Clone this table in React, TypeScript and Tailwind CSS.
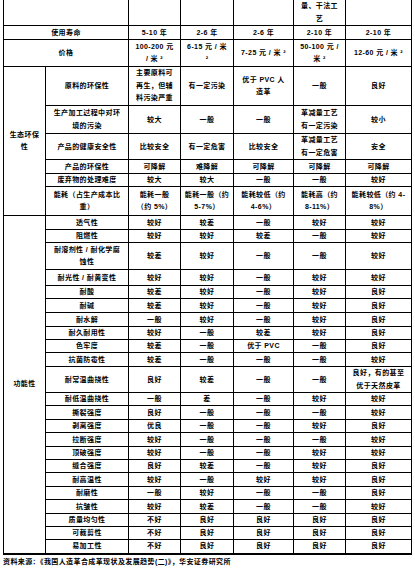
import React from 'react';

type Row = { label: React.ReactNode; cells: React.ReactNode[]; h: number };

const headRows: Row[] = [
  { label: '', cells: ['', '', '', <>量、干法工<br />艺</>, ''], h: 25 },
  { label: '使用寿命', cells: ['5-10 年', '2-6 年', '2-6 年', '2-10 年', '2-10 年'], h: 14 },
  {
    label: '价格',
    cells: [
      <>100-200 元<br />/ 米 ²</>,
      <>6-15 元 / 米<br />²</>,
      '7-25 元 / 米 ²',
      <>50-100 元 /<br />米 ²</>,
      '12-60 元 / 米 ²',
    ],
    h: 27,
  },
];

const ecoRows: Row[] = [
  {
    label: '原料的环保性',
    cells: [<>主要原料可<br />再生，但辅<br />料污染严重</>, '有一定污染', <>优于 PVC 人<br />造革</>, '一般', '良好'],
    h: 39,
  },
  {
    label: <>生产加工过程中对环<br />境的污染</>,
    cells: ['较大', '一般', '一般', <>革减量工艺<br />有一定污染</>, '较小'],
    h: 28,
  },
  {
    label: '产品的健康安全性',
    cells: ['比较安全', '有一定危害', '比较安全', <>革减量工艺<br />有一定危害</>, '安全'],
    h: 26,
  },
  { label: '产品的环保性', cells: ['可降解', '难降解', '可降解', '可降解', '可降解'], h: 14 },
  { label: '废弃物的处理难度', cells: ['较大', '较大', '一般', '一般', '较好'], h: 13 },
  {
    label: <>能耗（占生产成本比<br />重）</>,
    cells: [
      <>能耗一般<br />（约 5%）</>,
      <>能耗一般（约<br />5-7%）</>,
      <>能耗较低（约<br />4-6%）</>,
      <>能耗高（约<br />8-11%）</>,
      <>能耗较低（约 4-<br />8%）</>,
    ],
    h: 29,
  },
];

const funcRows: Row[] = [
  { label: '透气性', cells: ['较好', '较差', '一般', '较好', '较好'], h: 14 },
  { label: '阻燃性', cells: ['较好', '较好', '较差', '一般', '较好'], h: 13 },
  { label: <>耐溶剂性 / 耐化学腐<br />蚀性</>, cells: ['较差', '较好', '一般', '一般', '较好'], h: 27 },
  { label: '耐光性 / 耐黄变性', cells: ['较好', '较好', '一般', '较好', '较好'], h: 16 },
  { label: '耐酸', cells: ['较差', '较好', '一般', '较好', '良好'], h: 13 },
  { label: '耐碱', cells: ['较差', '较好', '一般', '较好', '良好'], h: 14 },
  { label: '耐水解', cells: ['一般', '较好', '一般', '较好', '良好'], h: 14 },
  { label: '耐久耐用性', cells: ['较好', '一般', '较差', '较好', '良好'], h: 13 },
  { label: '色牢度', cells: ['较差', '一般', '优于 PVC', '一般', '良好'], h: 13 },
  { label: '抗菌防霉性', cells: ['较差', '一般', '一般', '一般', '较好'], h: 14 },
  {
    label: '耐常温曲挠性',
    cells: ['良好', '较差', '一般', '一般', <>良好，有的甚至<br />优于天然皮革</>],
    h: 26,
  },
  { label: '耐低温曲挠性', cells: ['一般', '差', '一般', '较好', '较好'], h: 13 },
  { label: '撕裂强度', cells: ['良好', '一般', '一般', '一般', '较好'], h: 14 },
  { label: '剥离强度', cells: ['优良', '一般', '一般', '较好', '良好'], h: 13 },
  { label: '拉断强度', cells: ['较好', '一般', '一般', '一般', '较好'], h: 14 },
  { label: '顶破强度', cells: ['较好', '一般', '一般', '较好', '较好'], h: 13 },
  { label: '缝合强度', cells: ['良好', '较差', '一般', '较好', '良好'], h: 13 },
  { label: '耐高温性', cells: ['较好', '一般', '较好', '较好', '良好'], h: 14 },
  { label: '耐磨性', cells: ['一般', '较好', '一般', '一般', '良好'], h: 13 },
  { label: '抗皱性', cells: ['较好', '较差', '一般', '一般', '较好'], h: 14 },
  { label: '质量均匀性', cells: ['不好', '良好', '良好', '良好', '良好'], h: 13 },
  { label: '可裁剪性', cells: ['不好', '良好', '良好', '良好', '良好'], h: 13 },
  { label: '易加工性', cells: ['不好', '良好', '良好', '良好', '良好'], h: 14 },
];

// single lines get a tight line box so 13px rows stay 13px; wrapped text keeps 12.5px spacing
const cellClass = (c: React.ReactNode) =>
  `border border-black p-0 text-center align-middle ${typeof c === 'string' ? 'leading-[10px]' : 'leading-[12.5px]'}`;

function Group({ title, rows }: { title: React.ReactNode; rows: Row[] }) {
  return (
    <>
      {rows.map((row, i) => (
        <tr key={i} style={{ height: row.h }}>
          {i === 0 && (
            <td rowSpan={rows.length} className={cellClass(title)}>
              {title}
            </td>
          )}
          <td className={cellClass(row.label)}>{row.label}</td>
          {row.cells.map((c, j) => (
            <td key={j} className={cellClass(c)}>
              {c}
            </td>
          ))}
        </tr>
      ))}
    </>
  );
}

export default function App() {
  return (
    <div className="w-[415px] h-[569px] bg-white overflow-hidden text-black font-[family-name:'Liberation_Sans','Noto_Sans_CJK_SC',sans-serif] text-[7px] font-semibold tracking-[0.4px]">
      <table className="ml-[3px] table-fixed border-collapse w-[408px] border-b-2 border-b-black">
        <colgroup>
          <col className="w-[42px]" />
          <col className="w-[83px]" />
          <col className="w-[52px]" />
          <col className="w-[53px]" />
          <col className="w-[60px]" />
          <col className="w-[52px]" />
          <col className="w-[66px]" />
        </colgroup>
        <tbody>
          {headRows.map((row, i) => (
            <tr key={i} style={{ height: row.h }}>
              <td colSpan={2} className={`${cellClass(row.label)} ${i === 0 ? 'border-t-0' : ''}`}>
                {row.label}
              </td>
              {row.cells.map((c, j) => (
                <td key={j} className={`${cellClass(c)} ${i === 0 ? 'border-t-0' : ''}`}>
                  {c}
                </td>
              ))}
            </tr>
          ))}
          <Group title={<>生态环保<br />性</>} rows={ecoRows} />
          <Group title="功能性" rows={funcRows} />
        </tbody>
      </table>
      <p className="ml-[3px] mt-[2px] leading-[10px]">
        资料来源：《我国人造革合成革现状及发展趋势(二)》，华安证券研究所
      </p>
    </div>
  );
}
